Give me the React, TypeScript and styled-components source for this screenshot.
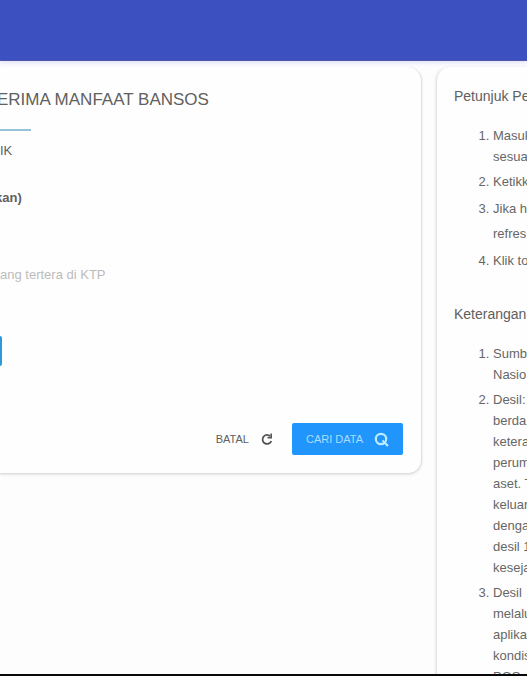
import React from 'react';
import styled, { createGlobalStyle } from 'styled-components';

const GlobalStyle = createGlobalStyle`
  *, *::before, *::after { box-sizing: border-box; }
  body {
    margin: 0;
    background: #fdfdfd;
    color: #666;
    font: 13px/21px "Liberation Sans", Arial, sans-serif;
  }
`;

const Shell = styled.div`
  display: flex;
  flex-direction: column;
  height: 100vh;
  overflow: hidden;
  border-bottom: 2px solid #080808;
`;

const TopBar = styled.header`
  flex: none;
  height: 61px;
  background: #3d50c0;
  border-bottom: 1px solid #5058a8;
  box-shadow: 0 1px 5px #d4d8fa;
`;

const Columns = styled.main`
  flex: 1;
  min-height: 0;
  display: grid;
  grid-template-columns: minmax(0, 1fr) 91px;
  gap: 14px;
  align-items: start;
  padding-top: 6px;
  overflow: hidden;
`;

const FormCard = styled.form`
  display: flex;
  flex-direction: column;
  align-items: flex-start;
  padding: 22px 18px 18px 0;
  overflow: hidden;
  background: #fefefe;
  border: solid #dedede;
  border-width: 0 1px 1px 0;
  border-radius: 0 14px 14px 0;
  box-shadow: 0 1px 3px #e4e4e4;
`;

const Title = styled.h1`
  margin: 0 0 0 -3px;
  color: #606060;
  font-size: 17px;
  font-weight: 400;
  line-height: 22px;
  white-space: nowrap;
`;

const TabLine = styled.div`
  width: 31px;
  height: 2px;
  margin: 18px 0 9px;
  background: #93c4d9;
`;

const FieldLabel = styled.label<{ $strong?: boolean }>`
  margin-left: ${({ $strong }) => ($strong ? '-5px' : '0')};
  margin-top: ${({ $strong }) => ($strong ? '26px' : '0')};
  color: #606060;
  font-weight: ${({ $strong }) => ($strong ? 700 : 400)};
`;

const NameInput = styled.input`
  width: 100%;
  height: 32px;
  margin: 50px 0 46px;
  padding: 0;
  border: 0;
  outline: 0;
  background: transparent;
  color: #606060;
  font: inherit;
  &::placeholder { color: #bcbcbc; opacity: 1; }
`;

const CodeButton = styled.button`
  width: 2px;
  height: 30px;
  padding: 0;
  border: 0;
  border-radius: 0 2px 2px 0;
  background: #2c9ad8;
`;

const Actions = styled.div`
  display: flex;
  align-items: center;
  align-self: flex-end;
  gap: 18px;
  margin-top: 57px;
`;

const ActionButton = styled.button<{ $primary?: boolean }>`
  display: flex;
  align-items: center;
  gap: 11px;
  height: 32px;
  padding: ${({ $primary }) => ($primary ? '0 14px' : '0')};
  border: 0;
  border-radius: 2px;
  background: ${({ $primary }) => ($primary ? '#2095fb' : 'transparent')};
  color: ${({ $primary }) => ($primary ? '#a9dcff' : '#606060')};
  font: 11px/16px "Liberation Sans", Arial, sans-serif;
  white-space: nowrap;
`;

const InfoCard = styled.aside`
  display: flex;
  flex-direction: column;
  padding: 19px 0 0 17px;
  overflow: hidden;
  white-space: nowrap;
  background: #fefefe;
  border: solid #e2e2e2;
  border-width: 0 0 0 1px;
  border-radius: 14px 0 0 0;
  box-shadow: -1px 0 3px #ececec;
`;

const InfoTitle = styled.h2`
  margin: 0 0 18px;
  color: #606060;
  font-size: 14px;
  font-weight: 400;
`;

const InfoList = styled.ol`
  display: flex;
  flex-direction: column;
  gap: 4px;
  margin: 0 0 33px;
  padding-left: 39px;
`;

const InfoItem = styled.li<{ $loose?: boolean }>`
  line-height: ${({ $loose }) => ($loose ? '25px' : '21px')};
`;

const Line = styled.span`
  display: block;
`;

type Item = { lines: string[]; loose?: boolean };

const instructions: Item[] = [
  { lines: ['Masuk', 'sesua'] },
  { lines: ['Ketikk'] },
  { lines: ['Jika h', 'refres'], loose: true },
  { lines: ['Klik to'] },
];

const notes: Item[] = [
  { lines: ['Sumb', 'Nasio'] },
  { lines: ['Desil:', 'berda', 'ketera', 'perum', 'aset. T', 'keluar', 'denga', 'desil 1', 'keseja'] },
  { lines: ['Desil', 'melalu', 'aplika', 'kondis', 'POS'] },
];

function Items({ items }: { items: Item[] }) {
  return (
    <InfoList>
      {items.map((item) => (
        <InfoItem key={item.lines[0]} $loose={item.loose}>
          {item.lines.map((line) => <Line key={line}>{line}</Line>)}
        </InfoItem>
      ))}
    </InfoList>
  );
}

function RefreshIcon() {
  return (
    <svg width="14" height="14" viewBox="0 0 14 14" fill="none" stroke="#555" aria-hidden="true">
      <path d="M10.2 4.2A4.5 4.5 0 1 0 11.3 9" strokeWidth="1.8" />
      <path d="M11.2 1.5v4.1H7.5" strokeWidth="1.6" />
    </svg>
  );
}

function SearchIcon() {
  return (
    <svg width="15" height="15" viewBox="0 0 15 15" fill="none" stroke="#b9edff" strokeWidth="2.2" aria-hidden="true">
      <circle cx="7" cy="7" r="5.2" />
      <path d="M8.5 8.5l5.5 5.5" />
    </svg>
  );
}

export default function App() {
  return (
    <>
      <GlobalStyle />
      <Shell>
        <TopBar />
        <Columns>
          <FormCard onSubmit={(event) => event.preventDefault()}>
            <Title>ERIMA MANFAAT BANSOS</Title>
            <TabLine />
            <FieldLabel htmlFor="name">IK</FieldLabel>
            <FieldLabel htmlFor="name" $strong>kan)</FieldLabel>
            <NameInput id="name" placeholder="ang tertera di KTP" />
            <CodeButton type="button" aria-label="Refresh" />
            <Actions>
              <ActionButton type="reset">BATAL <RefreshIcon /></ActionButton>
              <ActionButton type="submit" $primary>CARI DATA <SearchIcon /></ActionButton>
            </Actions>
          </FormCard>
          <InfoCard>
            <InfoTitle>Petunjuk Pe</InfoTitle>
            <Items items={instructions} />
            <InfoTitle>Keterangan</InfoTitle>
            <Items items={notes} />
          </InfoCard>
        </Columns>
      </Shell>
    </>
  );
}
